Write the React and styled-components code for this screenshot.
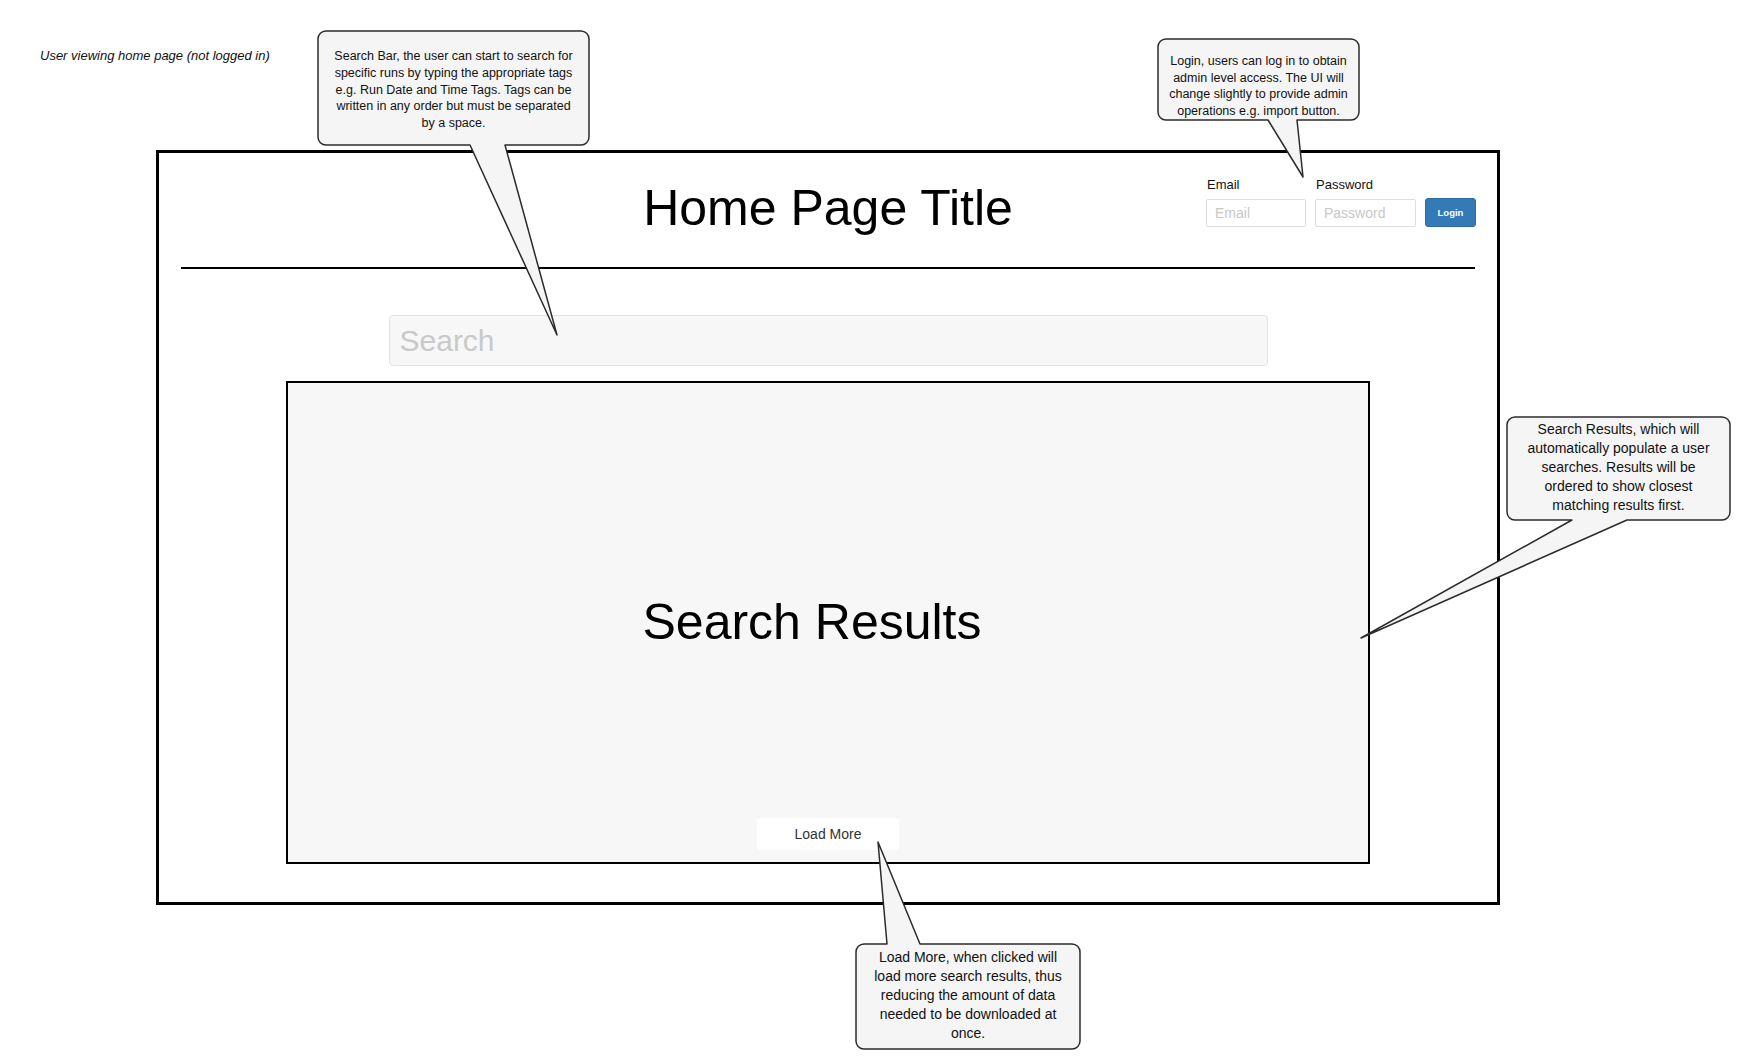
import React from 'react';
import styled, { createGlobalStyle } from 'styled-components';

const GlobalStyle = createGlobalStyle`
  html, body { margin: 0; padding: 0; background: #ffffff; }
  body { font-family: "Liberation Sans", Arial, sans-serif; color: #111; }
  *, *::before, *::after { box-sizing: border-box; }
`;

const Page = styled.div`
  position: relative;
  width: 1744px;
  height: 1056px;
  overflow: hidden;
  padding-top: 48px;
`;

const Caption = styled.div`
  margin-left: 40px;
  font-size: 13px;
  line-height: 16px;
  font-style: italic;
  color: #111;
`;

const Frame = styled.div`
  margin: 86px 0 0 156px;
  width: 1344px;
  height: 755px;
  border: 3px solid #000;
  display: flex;
  flex-direction: column;
  align-items: center;
`;

const Header = styled.header`
  align-self: stretch;
  margin: 0 22px;
  height: 116px;
  border-bottom: 2px solid #000;
  display: grid;
  grid-template-columns: 1fr auto 1fr;
  align-items: start;
`;

const Title = styled.h1`
  grid-column: 2;
  margin: 0;
  padding-top: 27px;
  font-size: 50px;
  line-height: 56px;
  font-weight: 400;
  color: #000;
`;

const LoginForm = styled.form`
  grid-column: 3;
  justify-self: end;
  display: flex;
  align-items: flex-end;
  gap: 9px;
  padding-top: 24px;
  margin-right: -1px;
`;

const Field = styled.label`
  display: flex;
  flex-direction: column;
`;

const FieldLabel = styled.span`
  font-size: 13px;
  line-height: 16px;
  margin: 0 0 6px 1px;
  color: #111;
`;

const SmallInput = styled.input`
  width: ${p => p.$w}px;
  height: 28px;
  border: 1px solid #dedede;
  border-radius: 2px;
  padding: 0 8px;
  font-family: inherit;
  font-size: 14px;
  color: #555;
  background: #fff;
  outline: none;
  &::placeholder { color: #c8c8c8; }
`;

const LoginButton = styled.button`
  width: 51px;
  height: 29px;
  background: #337ab7;
  border: 1px solid #2e6da4;
  border-radius: 3px;
  color: #fff;
  font-family: inherit;
  font-size: 9.5px;
  font-weight: 700;
  padding: 0;
`;

const SearchInput = styled.input`
  margin-top: 46px;
  width: 879px;
  height: 51px;
  flex-shrink: 0;
  background: #f7f7f7;
  border: 1px solid #e3e3e3;
  border-radius: 4px;
  padding: 0 10px;
  font-family: inherit;
  font-size: 30px;
  color: #444;
  outline: none;
  &::placeholder { color: #c9c9c9; }
`;

const Results = styled.section`
  margin-top: 15px;
  width: 1084px;
  height: 483px;
  flex-shrink: 0;
  border: 2px solid #000;
  background: #f7f7f7;
  display: flex;
  flex-direction: column;
  align-items: center;
  padding: 42px 0 12px;
`;

const ResultsLabel = styled.div`
  flex: 1;
  align-self: stretch;
  display: flex;
  align-items: center;
  justify-content: center;
  padding-right: 32px;
  font-size: 50px;
  color: #000;
`;

const LoadMore = styled.button`
  width: 142px;
  height: 32px;
  background: #fff;
  border: none;
  border-radius: 4px;
  font-family: inherit;
  font-size: 14px;
  color: #333;
  padding: 0;
`;

const Bubble = styled.div`
  position: absolute;
  z-index: 2;
  left: ${p => p.$x}px;
  top: ${p => p.$y}px;
  width: ${p => p.$w}px;
  height: ${p => p.$h}px;
  padding-top: ${p => p.$pt}px;
  font-size: ${p => p.$fs}px;
  line-height: ${p => p.$lh}px;
  text-align: center;
  white-space: nowrap;
  color: #111;
`;

const BubbleShape = styled.svg`
  position: absolute;
  left: 0;
  top: 0;
  overflow: visible;
`;

const BubbleText = styled.div`
  position: relative;
`;

function bubblePath(w, h, r, side, b1, b2, tx, ty) {
  const tr = `A ${r} ${r} 0 0 1`;
  const top = side === 'top'
    ? `M ${r} 0 H ${b1} L ${tx} ${ty} L ${b2} 0 H ${w - r}`
    : `M ${r} 0 H ${w - r}`;
  const bottom = side === 'bottom'
    ? `H ${b2} L ${tx} ${ty} L ${b1} ${h} H ${r}`
    : `H ${r}`;
  return `${top} ${tr} ${w} ${r} V ${h - r} ${tr} ${w - r} ${h} ${bottom} ${tr} 0 ${h - r} V ${r} ${tr} ${r} 0 Z`;
}

function Callout({ x, y, w, h, side, b1, b2, tx, ty, fs, lh, pt, lines }) {
  return (
    <Bubble $x={x} $y={y} $w={w} $h={h} $fs={fs} $lh={lh} $pt={pt}>
      <BubbleShape width={w} height={h}>
        <path
          d={bubblePath(w, h, 8, side, b1, b2, tx, ty)}
          fill="#f5f5f5"
          stroke="#2b2b2b"
          strokeWidth="1.5"
          strokeLinejoin="round"
        />
      </BubbleShape>
      <BubbleText>
        {lines.map((l, i) => (
          <div key={i}>{l}</div>
        ))}
      </BubbleText>
    </Bubble>
  );
}

const callouts = [
  {
    x: 318, y: 31, w: 271, h: 114, side: 'bottom', b1: 152, b2: 187, tx: 239, ty: 304,
    fs: 12.5, lh: 16.8, pt: 17,
    lines: [
      'Search Bar, the user can start to search for',
      'specific runs by typing the appropriate tags',
      'e.g. Run Date and Time Tags. Tags can be',
      'written in any order but must be separated',
      'by a space.',
    ],
  },
  {
    x: 1158, y: 39, w: 201, h: 81, side: 'bottom', b1: 110, b2: 139, tx: 145, ty: 138,
    fs: 12.5, lh: 16.7, pt: 14,
    lines: [
      'Login, users can log in to obtain',
      'admin level access. The UI will',
      'change slightly to provide admin',
      'operations e.g. import button.',
    ],
  },
  {
    x: 1507, y: 417, w: 223, h: 103, side: 'bottom', b1: 65, b2: 120, tx: -146, ty: 221,
    fs: 14, lh: 19, pt: 3,
    lines: [
      'Search Results, which will',
      'automatically populate a user',
      'searches. Results will be',
      'ordered to show closest',
      'matching results first.',
    ],
  },
  {
    x: 856, y: 944, w: 224, h: 105, side: 'top', b1: 31, b2: 64, tx: 22, ty: -102,
    fs: 14, lh: 19, pt: 4,
    lines: [
      'Load More, when clicked will',
      'load more search results, thus',
      'reducing the amount of data',
      'needed to be downloaded at',
      'once.',
    ],
  },
];

export default function App() {
  return (
    <>
      <GlobalStyle />
      <Page>
        <Caption>User viewing home page (not logged in)</Caption>
        <Frame>
          <Header>
            <Title>Home Page Title</Title>
            <LoginForm onSubmit={e => e.preventDefault()}>
              <Field>
                <FieldLabel>Email</FieldLabel>
                <SmallInput $w={100} placeholder="Email" />
              </Field>
              <Field>
                <FieldLabel>Password</FieldLabel>
                <SmallInput $w={101} type="password" placeholder="Password" />
              </Field>
              <LoginButton type="submit">Login</LoginButton>
            </LoginForm>
          </Header>
          <SearchInput placeholder="Search" />
          <Results>
            <ResultsLabel>Search Results</ResultsLabel>
            <LoadMore type="button">Load More</LoadMore>
          </Results>
        </Frame>
        {callouts.map((c, i) => (
          <Callout key={i} {...c} />
        ))}
      </Page>
    </>
  );
}
